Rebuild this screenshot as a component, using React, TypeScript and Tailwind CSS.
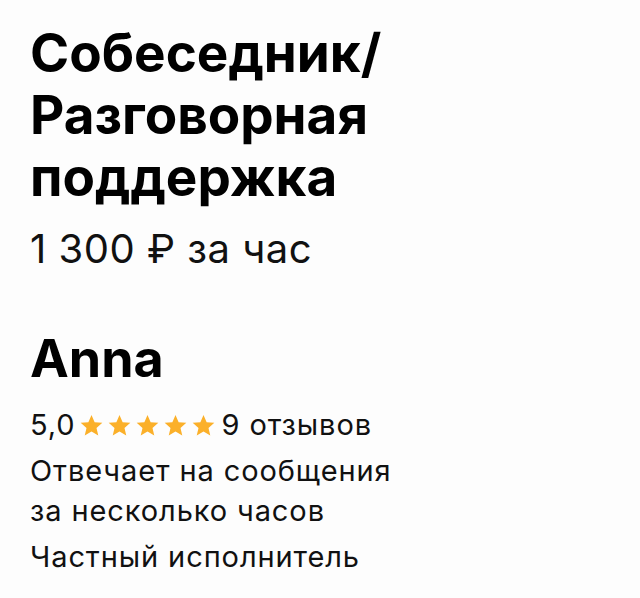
import React from 'react'

const Star = () => (
  <svg viewBox="0 0 24 24" className="w-[25px] h-[25px]" fill="#fbb02a">
    <path d="M12 1.8l3 7 7.4.6-5.6 4.9 1.7 7.3L12 17.7l-6.5 3.9 1.7-7.3-5.6-4.9 7.4-.6z" />
  </svg>
)

export default function App() {
  return (
    <div
      className="min-h-[598px] bg-[#fdfdfd] px-[30px] pt-[22px] text-[#111]"
      style={{ fontFamily: 'Inter, "Noto Sans", sans-serif' }}
    >
      {/* Service title and price */}
      <h1 className="text-[53px] leading-[62px] font-bold text-black">
        Собеседник/
        <br />
        Разговорная
        <br />
        поддержка
      </h1>
      <p className="mt-[17px] text-[40px] leading-[48px] tracking-[0.5px]">1 300 ₽ за час</p>

      {/* Performer */}
      <h2 className="mt-[56px] text-[52px] leading-[60px] font-bold text-black">Anna</h2>
      <div className="mt-[16px] flex flex-col gap-[6px] text-[29px] leading-[40px] tracking-[0.9px]">
        <div className="flex items-center">
          <span>5,0</span>
          <span className="ml-[4px] mr-[5px] flex gap-[3px]">
            {Array.from({ length: 5 }).map((_, i) => (
              <Star key={i} />
            ))}
          </span>
          <span>9 отзывов</span>
        </div>
        <p>
          Отвечает на сообщения
          <br />
          за несколько часов
        </p>
        <p>Частный исполнитель</p>
      </div>
    </div>
  )
}
